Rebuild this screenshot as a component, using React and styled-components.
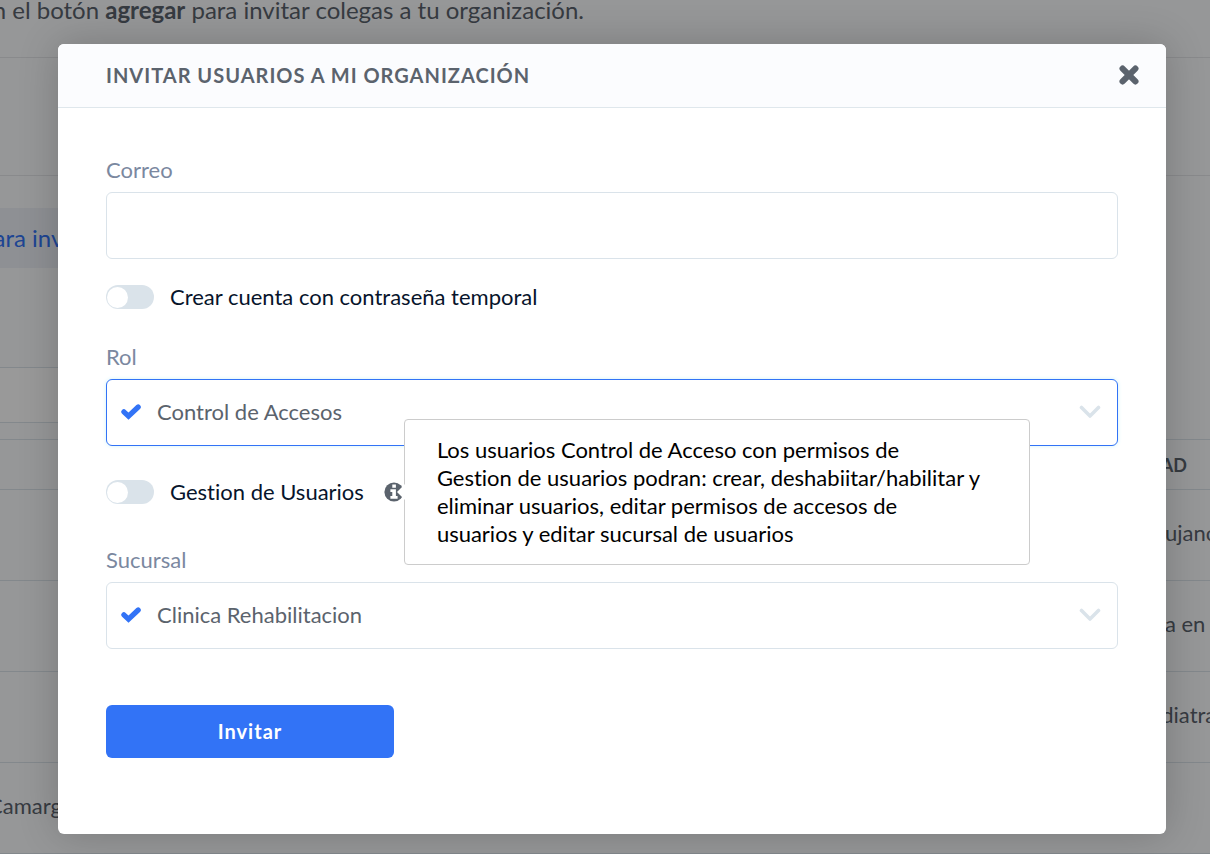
import React from "react";
import styled, { createGlobalStyle } from "styled-components";

const GlobalStyle = createGlobalStyle`
  * {
    box-sizing: border-box;
  }
  body {
    margin: 0;
    background: #fbfcfe;
    font-family: Lato, "Liberation Sans", sans-serif;
    font-size: 22px;
    font-variant-ligatures: none;
    line-height: 28px;
    color: #5b636d;
  }
`;

const rows = [
  { name: "", specialty: "Cirujano" },
  { name: "", specialty: "Alta en" },
  { name: "", specialty: "Pediatra" },
  { name: "Camargo", specialty: "" },
];

const CheckIcon = () => (
  <svg width="20" height="16" viewBox="0 0 20 16" aria-hidden="true">
    <path d="M2.9 7.8 L7.5 12.2 L17.2 3" fill="none" stroke="#3273f6" strokeWidth="5.2" strokeLinecap="round" />
  </svg>
);

const ChevronIcon = () => (
  <svg width="22" height="14" viewBox="0 0 22 14" aria-hidden="true">
    <path
      d="M2.5 2.5 L11 11 L19.5 2.5"
      fill="none"
      stroke="#dae3ea"
      strokeWidth="3.6"
      strokeLinecap="round"
      strokeLinejoin="round"
    />
  </svg>
);

const CloseIcon = () => (
  <svg width="20" height="20" viewBox="0 0 20 20" aria-hidden="true">
    <path d="M3.6 3.6 L16.4 16.4 M16.4 3.6 L3.6 16.4" fill="none" stroke="#5b636d" strokeWidth="6.2" strokeLinecap="round" />
  </svg>
);

const InfoIcon = () => (
  <svg width="20" height="20" viewBox="0 0 20 20" aria-hidden="true">
    <circle cx="10" cy="10" r="9.6" fill="#5b636d" />
    <path d="M8.3 2.6h3.6v3.2H8.3z M6.4 7.2h5.5v6.8h1.7v2.8H6.4V14h1.9V10H6.4z" fill="#fff" />
  </svg>
);

const SelectField = ({ id, label, value, active }) => (
  <Field>
    <Label htmlFor={id}>{label}</Label>
    <SelectBox $active={active}>
      <CheckIcon />
      <Select id={id} defaultValue={value}>
        <option>{value}</option>
      </Select>
      <ChevronIcon />
    </SelectBox>
  </Field>
);

const App = () => {
  return (
    <>
      <GlobalStyle />
      <Screen>
        <Page aria-hidden="true">
          <Intro>
            en el botón <strong>agregar</strong> para invitar colegas a tu organización.
          </Intro>
          <Summary />
          <Actions>
            <InviteLink href="#invitar" tabIndex={-1}>
              para invitar
            </InviteLink>
            <Search />
          </Actions>
          <Table>
            <thead>
              <tr>
                <th />
                <SideHead>EDAD</SideHead>
              </tr>
            </thead>
            <tbody>
              {rows.map((row) => (
                <tr key={row.name + row.specialty}>
                  <td>{row.name}</td>
                  <td>{row.specialty}</td>
                </tr>
              ))}
            </tbody>
          </Table>
        </Page>
        <Overlay>
          <Modal role="dialog" aria-labelledby="modal-title">
            <Header>
              <Title id="modal-title">INVITAR USUARIOS A MI ORGANIZACIÓN</Title>
              <CloseButton type="button" aria-label="Cerrar">
                <CloseIcon />
              </CloseButton>
            </Header>
            <Form>
              <Field>
                <Label htmlFor="correo">Correo</Label>
                <Input id="correo" type="email" />
              </Field>
              <ToggleRow>
                <Toggle id="temporal" type="checkbox" />
                <ToggleLabel htmlFor="temporal">Crear cuenta con contraseña temporal</ToggleLabel>
              </ToggleRow>
              <SelectField id="rol" label="Rol" value="Control de Accesos" active />
              <ToggleRow $spaced>
                <Toggle id="gestion" type="checkbox" />
                <ToggleLabel htmlFor="gestion">Gestion de Usuarios</ToggleLabel>
                <Info>
                  <InfoIcon />
                  <Tooltip role="tooltip">
                    Los usuarios Control de Acceso con permisos de
                    <br />
                    Gestion de usuarios podran: crear, deshabiitar/habilitar y
                    <br />
                    eliminar usuarios, editar permisos de accesos de
                    <br />
                    usuarios y editar sucursal de usuarios
                  </Tooltip>
                </Info>
              </ToggleRow>
              <SelectField id="sucursal" label="Sucursal" value="Clinica Rehabilitacion" />
              <SubmitButton type="button">Invitar</SubmitButton>
            </Form>
          </Modal>
        </Overlay>
      </Screen>
    </>
  );
};

const Screen = styled.div`
  display: grid;
  min-height: 100vh;
  overflow: hidden;
  > * {
    grid-area: 1 / 1;
    min-width: 0;
  }
`;

/* sits behind the overlay and never makes the screen taller */
const Page = styled.div`
  height: 0;
  margin-left: -20px;
`;

const Intro = styled.p`
  height: 58px;
  margin: 0;
  border-bottom: 1px solid #e4e7ea;
  font-size: 24px;
  line-height: 20px;
  white-space: nowrap;
`;

const Summary = styled.div`
  height: 118px;
  border-bottom: 1px solid #e4e7ea;
`;

const Actions = styled.div`
  width: 50%;
  padding: 32px 0 16px;
`;

const InviteLink = styled.a`
  display: block;
  padding: 16px 0;
  background: #edf0f7;
  color: #3273f6;
  font-size: 24px;
  text-decoration: none;
`;

const Search = styled.div`
  height: 56px;
  margin-top: 99px;
  border: 1px solid #dae3ea;
  background: #ffffff;
`;

const Table = styled.table`
  width: 100%;
  border-collapse: collapse;
  table-layout: fixed;
  border-top: 1px solid #dae3ea;
  tr {
    border-bottom: 1px solid #dae3ea;
  }
  th {
    height: 50px;
    padding: 0;
  }
  td {
    height: 91px;
    padding: 0 0 4px 8px;
    text-align: left;
  }
  td:last-child {
    padding: 0 0 4px;
  }
`;

const SideHead = styled.th`
  width: 73px;
  font-size: 18px;
  text-align: left;
`;

const Overlay = styled.div`
  z-index: 1;
  padding: 44px 44px 20px 58px;
  background: rgba(0, 0, 0, 0.4);
`;

const Modal = styled.section`
  height: 100%;
  border-radius: 6px;
  background: #ffffff;
  box-shadow: 0 0 40px rgba(0, 0, 0, 0.2);
`;

const Header = styled.header`
  display: flex;
  align-items: center;
  justify-content: space-between;
  height: 64px;
  padding: 0 24px 2px 48px;
  border-bottom: 1px solid #dfe7ec;
  border-radius: 6px 6px 0 0;
  background: #fbfcfe;
`;

const Title = styled.h1`
  margin: 0;
  font-size: 20px;
  font-weight: 700;
  letter-spacing: 1px;
`;

const CloseButton = styled.button`
  display: flex;
  padding: 3px;
  border: 0;
  background: none;
  cursor: pointer;
`;

const Form = styled.form`
  padding: 48px 48px 76px;
`;

const Field = styled.div`
  display: flex;
  flex-direction: column;
  gap: 8px;
`;

const Label = styled.label`
  color: #7b88a0;
`;

const Input = styled.input`
  width: 100%;
  height: 67px;
  padding: 0 16px;
  border: 1px solid #dae3ea;
  border-radius: 6px;
  background: #ffffff;
  color: #5b636d;
  font: inherit;
  outline: none;
`;

const SelectBox = styled.div`
  display: flex;
  align-items: center;
  gap: 16px;
  height: 67px;
  padding: 0 16px 2px 14px;
  border: 1px solid ${(props) => (props.$active ? "#3273f6" : "#dae3ea")};
  border-radius: 6px;
  background: #ffffff;
  box-shadow: ${(props) => (props.$active ? "0 0 4px #d3f3f8" : "none")};
`;

const Select = styled.select`
  flex: 1;
  height: 100%;
  padding: 0;
  border: 0;
  appearance: none;
  background: transparent;
  color: #5b636d;
  font: inherit;
  outline: none;
`;

const ToggleRow = styled.div`
  display: flex;
  align-items: center;
  gap: 16px;
  padding: ${(props) => (props.$spaced ? "32px 0 40px" : "24px 0 32px")};
`;

const Toggle = styled.input`
  display: flex;
  align-items: center;
  width: 48px;
  height: 24px;
  margin: 0;
  padding: 1px;
  border-radius: 12px;
  appearance: none;
  background: #dae3ea;
  cursor: pointer;
  &::before {
    content: "";
    width: 21px;
    height: 21px;
    border-radius: 50%;
    background: #ffffff;
  }
  &:checked {
    justify-content: flex-end;
    background: #3273f6;
  }
`;

const ToggleLabel = styled.label`
  color: #07142b;
`;

const Info = styled.span`
  position: relative;
  display: flex;
  margin-left: 4px;
`;

const Tooltip = styled.span`
  position: absolute;
  z-index: 2;
  left: 100%;
  top: 50%;
  width: 626px;
  padding: 16px 32px;
  transform: translateY(-50%);
  border: 1px solid #cccccc;
  border-radius: 4px;
  background: #ffffff;
  color: #000000;
  &::before {
    content: "";
    position: absolute;
    right: 100%;
    top: 50%;
    border: 8px solid transparent;
    border-left: 0;
    border-right-color: #ffffff;
    transform: translateY(-50%);
  }
`;

const SubmitButton = styled.button`
  width: 288px;
  height: 53px;
  margin-top: 56px;
  padding: 0 0 2px;
  border: 0;
  border-radius: 6px;
  background: #3273f6;
  color: #ffffff;
  font: inherit;
  font-size: 20px;
  font-weight: 700;
  letter-spacing: 1px;
  cursor: pointer;
`;

export default App;
